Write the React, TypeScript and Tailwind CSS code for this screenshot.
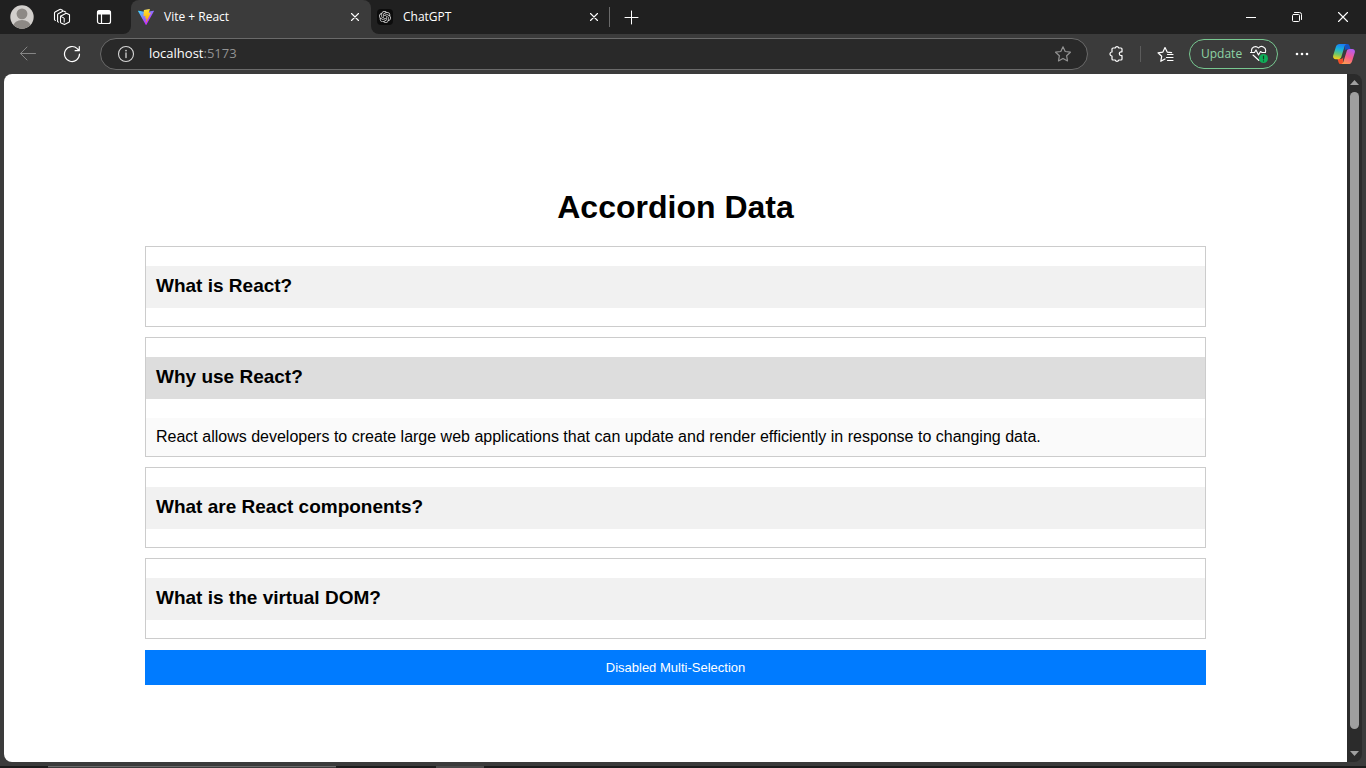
import { useState } from "react";
import type { ReactNode } from "react";
import { SiOpenai } from "react-icons/si";

const items = [
  {
    id: "1",
    question: "What is React?",
    answer: "React is a JavaScript library for building user interfaces.",
  },
  {
    id: "2",
    question: "Why use React?",
    answer:
      "React allows developers to create large web applications that can update and render efficiently in response to changing data.",
  },
  {
    id: "3",
    question: "What are React components?",
    answer: "Components are independent, reusable pieces of a user interface.",
  },
  {
    id: "4",
    question: "What is the virtual DOM?",
    answer: "The virtual DOM is a lightweight copy of the actual DOM.",
  },
];

function Icon({ size = 16, className = "", children }: { size?: number; className?: string; children: ReactNode }) {
  return (
    <svg
      width={size}
      height={size}
      viewBox={`0 0 ${size} ${size}`}
      fill="none"
      stroke="currentColor"
      strokeLinecap="round"
      strokeLinejoin="round"
      aria-hidden="true"
      className={`shrink-0 ${className}`}
    >
      {children}
    </svg>
  );
}

function Avatar() {
  return (
    <svg width="24" height="24" viewBox="0 0 23 23" aria-hidden="true">
      <defs>
        <clipPath id="avatar">
          <circle cx="11.5" cy="11.5" r="11.2" />
        </clipPath>
      </defs>
      <g clipPath="url(#avatar)">
        <rect width="23" height="23" fill="#d2cfcc" />
        <circle cx="11.5" cy="8.5" r="5.2" fill="#8d8985" />
        <ellipse cx="11.5" cy="20" rx="8.2" ry="5.6" fill="#8d8985" />
      </g>
    </svg>
  );
}

function ViteLogo() {
  return (
    <svg width="16" height="16" viewBox="0 0 256 257" aria-hidden="true" className="shrink-0">
      <defs>
        <linearGradient id="viteA" x1="-.828%" x2="57.636%" y1="7.652%" y2="78.411%">
          <stop offset="0%" stopColor="#41D1FF" />
          <stop offset="100%" stopColor="#BD34FE" />
        </linearGradient>
        <linearGradient id="viteB" x1="43.376%" x2="50.316%" y1="2.242%" y2="89.03%">
          <stop offset="0%" stopColor="#FFEA83" />
          <stop offset="8.333%" stopColor="#FFDD35" />
          <stop offset="100%" stopColor="#FFA800" />
        </linearGradient>
      </defs>
      <path
        fill="url(#viteA)"
        d="M255.153 37.938L134.897 252.976c-2.483 4.44-8.862 4.466-11.382.048L.875 37.958c-2.746-4.814 1.371-10.646 6.827-9.67l120.385 21.517a6.537 6.537 0 0 0 2.322-.004l117.867-21.483c5.438-.991 9.574 4.796 6.877 9.62Z"
      />
      <path
        fill="url(#viteB)"
        d="M185.432.063L96.44 17.501a3.268 3.268 0 0 0-2.634 3.014l-5.474 92.456a3.268 3.268 0 0 0 3.997 3.378l24.777-5.718c2.318-.535 4.413 1.507 3.936 3.838l-7.361 36.047c-.495 2.426 1.782 4.5 4.151 3.78l15.304-4.649c2.372-.72 4.652 1.36 4.15 3.788l-11.698 56.621c-.732 3.542 3.979 5.473 5.943 2.437l1.313-2.028l72.516-144.72c1.215-2.423-.88-5.186-3.54-4.672l-25.505 4.922c-2.396.462-4.435-1.77-3.759-4.114l16.646-57.705c.677-2.35-1.37-4.583-3.769-4.113Z"
      />
    </svg>
  );
}

function CopilotLogo() {
  return (
    <svg width="22" height="20" viewBox="0 0 22 20" aria-hidden="true">
      <defs>
        <linearGradient id="copilotBlue" x1="8" y1="0" x2="5" y2="15" gradientUnits="userSpaceOnUse">
          <stop offset="0" stopColor="#1a7df5" />
          <stop offset=".35" stopColor="#17b3dc" />
          <stop offset=".7" stopColor="#6fc66a" />
          <stop offset="1" stopColor="#f2ce1c" />
        </linearGradient>
        <linearGradient id="copilotPink" x1="18" y1="5" x2="11" y2="20" gradientUnits="userSpaceOnUse">
          <stop offset="0" stopColor="#b35cf0" />
          <stop offset=".5" stopColor="#f65a8d" />
          <stop offset="1" stopColor="#ffa04d" />
        </linearGradient>
      </defs>
      <path d="M12 0h2.4c1.3 0 1.8.9 2.2 2.1l1 3.2h-3.2c-1.600 0-2.300.800-2.700 2z" fill="#1552c4" />
      <path d="M10 20H7.600c-1.300 0-1.800-.900-2.200-2.100L4.500 15h3c1.600 0 2.300-.800 2.700-2z" fill="#f0502a" />
      <path d="M6.600 0h7.200c-1.300.200-1.900 1.100-2.300 2.400L8.400 12.800C7.900 14.400 7 15.200 5.400 15.200H2.700C.600 15.200-.300 13.500.200 11.600L3 2.600C3.500 1 4.800 0 6.600 0z" fill="url(#copilotBlue)" />
      <path d="M15.400 20H8.200c1.300-.200 1.900-1.100 2.300-2.400l3.100-10.200c.500-1.600 1.400-2.400 3-2.400h2.700c2.100 0 3 1.700 2.500 3.600L19 17.400c-.500 1.600-1.800 2.600-3.600 2.600z" fill="url(#copilotPink)" />
    </svg>
  );
}

function CloseIcon() {
  return (
    <Icon size={10}>
      <path d="M1.500 1.500l7 7M8.500 1.500l-7 7" strokeWidth="1.100" />
    </Icon>
  );
}

function TabStrip() {
  return (
    <header className="flex h-[34px] shrink-0 text-white">
      <div className="flex w-[131px] shrink-0 items-center rounded-br-lg bg-[#202020] pl-[10px]">
        <button aria-label="Profile" className="mr-[19px]">
          <Avatar />
        </button>
        <button aria-label="Workspaces" className="mr-[25px]">
          <Icon size={18}>
            <path d="M7.500 8.300l5.200-2.800c.4-.2.800-.2 1.200 0l2.600 1.300v6.400c0 .4-.2.800-.6 1L11.500 16.600 8.100 15c-.4-.2-.6-.5-.6-.9zM4.600 13.600V6.800c0-.5.200-.8.600-1l4.600-2.600c.4-.2.800-.2 1.200 0l1.600.8M1.500 11.800V5c0-.5.200-.8.600-1l4.600-2.600c.4-.2.800-.2 1.200 0l1.600.8" strokeWidth="1.100" />
            <path d="M7.500 8.300l3.700 1.800v4" strokeWidth="1" />
            <path d="M1.500 11.800l1 .6M4.600 13.600l1 .6" strokeWidth="1" />
          </Icon>
        </button>
        <button aria-label="Tab actions">
          <Icon size={16}>
            <rect x="1.500" y="1.500" width="13" height="13" rx="2" strokeWidth="1.200" />
            <path d="M2 2h12v3H2z" fill="currentColor" strokeWidth="1" />
            <path d="M5.500 5v9" strokeWidth="1.200" />
          </Icon>
        </button>
      </div>
      <div className="w-60 bg-[#202020]">
        <div className="flex h-full items-center rounded-t-lg bg-[#3b3b3b] pr-[11px] pl-[7px]">
          <ViteLogo />
          <span className="ml-[10px] flex-1 text-[12px]">Vite + React</span>
          <button aria-label="Close Vite + React">
            <CloseIcon />
          </button>
        </div>
      </div>
      <div className="flex flex-1 items-center rounded-bl-lg bg-[#202020]">
        <div className="flex h-5 w-[239px] items-center border-r border-[#6a6a6a] pr-[10px] pl-[6px]">
          <span className="grid size-4 shrink-0 place-items-center rounded bg-[#0c0c0c] text-[#d8d8d8]">
            <SiOpenai size={12} />
          </span>
          <span className="ml-[10px] flex-1 text-[12px]">ChatGPT</span>
          <button aria-label="Close ChatGPT">
            <CloseIcon />
          </button>
        </div>
        <button aria-label="New tab" className="ml-[14px]">
          <Icon size={15}>
            <path d="M7.500 1v13M1 7.500h13" strokeWidth="1" />
          </Icon>
        </button>
        <div className="ml-auto flex h-full">
          <button aria-label="Minimize" className="grid w-[46px] place-items-center">
            <Icon size={10}>
              <path d="M0 5.500h10" strokeLinecap="butt" />
            </Icon>
          </button>
          <button aria-label="Restore" className="grid w-[46px] place-items-center">
            <Icon size={10}>
              <rect x=".5" y="2.500" width="7" height="7" rx="1" />
              <path d="M2.500.5H7.500a2 2 0 0 1 2 2v5" />
            </Icon>
          </button>
          <button aria-label="Close window" className="grid w-[46px] place-items-center">
            <Icon size={12}>
              <path d="M1.500 1.500l9 9M10.500 1.500l-9 9" strokeWidth="1.100" />
            </Icon>
          </button>
        </div>
      </div>
    </header>
  );
}

function Toolbar() {
  return (
    <nav aria-label="Browser toolbar" className="flex h-10 shrink-0 items-center pr-[11px] pl-5 text-white">
      <button aria-label="Back" className="text-[#858585]">
        <Icon size={16}>
          <path d="M15.500 7.500H.5M7 1L.5 7.500l6.500 6.500" strokeWidth="1" />
        </Icon>
      </button>
      <button aria-label="Refresh" className="ml-[27px]">
        <Icon size={18}>
          <path d="M16.500 9A7.500 7.500 0 1 1 14.300 3.700L16.300 5.500M16.300 1.500v4.200h-4.200" strokeWidth="1.200" />
        </Icon>
      </button>
      <div className="ml-[19px] flex h-8 flex-1 items-center rounded-full border border-[#6a6a6a] bg-[#292929] pr-4 pl-4">
        <Icon size={18} className="text-[#d6d6d6]">
          <circle cx="9" cy="9" r="7.500" strokeWidth="1.100" />
          <path d="M9 8v4.500" strokeWidth="1.300" />
          <path d="M9 5.600v.1" strokeWidth="1.600" />
        </Icon>
        <a href="#address" className="ml-[14px] flex-1 text-[13px] text-[#929292]">
          <span className="text-white">localhost</span>:5173
        </a>
        <button aria-label="Add to favorites" className="text-[#929292]">
          <Icon size={16}>
            <path d="M8 .8l2.200 4.700 5.200.7-3.800 3.500.9 5.200L8 12.400l-4.500 2.500.9-5.200L.6 6.200l5.200-.7z" strokeWidth="1.200" />
          </Icon>
        </button>
      </div>
      <button aria-label="Extensions" className="ml-5">
        <Icon size={18}>
          <path d="M5 3h2.200a1.900 1.900 0 0 1 3.600 0H13a1 1 0 0 1 1 1v2.800h-.8a1.900 1.900 0 0 0 0 3.800h.8V14a1 1 0 0 1-1 1h-2.200a1.900 1.900 0 0 1-3.600 0H5a1 1 0 0 1-1-1v-3a2 2 0 0 1 0-4V4a1 1 0 0 1 1-1z" strokeWidth="1.200" />
        </Icon>
      </button>
      <span className="ml-[14px] h-4 w-px bg-[#5c5c5c]" />
      <button aria-label="Favorites" className="ml-4">
        <Icon size={17}>
          <path d="M8 13l-4.200 2.300.9-5L1 6.800l4.900-.7L8 1.500l2.200 4.600 4.400.6M10.500 8.500H16M9.500 11.500H16M10.500 14.500H16" strokeWidth="1.200" />
        </Icon>
      </button>
      <button className="ml-[15px] flex h-[30px] w-[89px] items-center justify-between rounded-full border border-[#78c891] pr-[9px] pl-[11px] text-[12px] text-[#8ed3a4]">
        Update
        <Icon size={18} className="text-white">
          <path d="M1.600 6.500A4 4 0 0 1 8.500 3a4 4 0 0 1 7 3.500M.5 7.500h4l1.500-2.600 2.500 5L10.500 6.500 12 7.500h3.500M3 10l6 5.500" strokeWidth="1.100" />
          <circle cx="13.500" cy="13.500" r="4.500" fill="#0fae58" stroke="none" />
          <path d="M13.500 11v2.800M13.500 15.800v.1" stroke="#163c25" strokeWidth="1.200" />
        </Icon>
      </button>
      <button aria-label="Settings and more" className="ml-4">
        <Icon size={16}>
          <g fill="currentColor" stroke="none">
            <circle cx="3" cy="8" r="1.300" />
            <circle cx="8" cy="8" r="1.300" />
            <circle cx="13" cy="8" r="1.300" />
          </g>
        </Icon>
      </button>
      <button aria-label="Copilot" className="ml-[23px]">
        <CopilotLogo />
      </button>
    </nav>
  );
}

function Scrollbar() {
  return (
    <div aria-hidden="true" className="flex w-[15px] shrink-0 flex-col items-center rounded-r-lg bg-[#2b2b2b] py-[6px] text-[#a0a0a0]">
      <svg width="9" height="5" viewBox="0 0 9 5" className="shrink-0">
        <path d="M4.500 0L9 5H0z" fill="currentColor" />
      </svg>
      <div className="mt-[7px] mb-[22px] w-[9px] flex-1 rounded-full bg-[#9f9f9f]" />
      <svg width="9" height="5" viewBox="0 0 9 5" className="shrink-0">
        <path d="M0 0h9L4.500 5z" fill="currentColor" />
      </svg>
    </div>
  );
}

function Accordion() {
  const [multi, setMulti] = useState(false);
  const [open, setOpen] = useState<string[]>(["2"]);

  const toggle = (id: string) => {
    if (open.includes(id)) setOpen(open.filter((other) => other !== id));
    else setOpen(multi ? [...open, id] : [id]);
  };

  return (
    <div className="mx-auto flex w-[79%] flex-col">
      <h1 className="mb-[19px] text-center text-[32px] leading-10 font-bold">Accordion Data</h1>
      <div className="flex flex-col gap-[10px]">
        {items.map(({ id, question, answer }) => {
          const isOpen = open.includes(id);
          return (
            <section key={id} className={`border border-[#cccccc] pt-[19px] ${isOpen ? "" : "pb-[18px]"}`}>
              <h3 className="text-[19px] leading-5 font-bold">
                <button
                  aria-expanded={isOpen}
                  aria-controls={`answer-${id}`}
                  onClick={() => toggle(id)}
                  className={`block w-full px-[10px] pt-[10px] pb-3 text-left ${isOpen ? "bg-[#dddddd]" : "bg-[#f1f1f1]"}`}
                >
                  {question}
                </button>
              </h3>
              {isOpen && (
                <div id={`answer-${id}`} className="mt-[19px] bg-[#fafafa] p-[10px] text-[16px] leading-[18px]">
                  {answer}
                </div>
              )}
            </section>
          );
        })}
      </div>
      <button onClick={() => setMulti(!multi)} className="mt-[11px] bg-[#007bff] p-[10px] text-[13px] leading-[15px] text-white">
        {multi ? "Enabled" : "Disabled"} Multi-Selection
      </button>
    </div>
  );
}

export default function App() {
  return (
    <div className="flex h-screen flex-col overflow-hidden bg-[#3b3b3b] font-['Open_Sans','Noto_Sans',sans-serif]">
      <TabStrip />
      <Toolbar />
      <div className="flex min-h-0 flex-1 px-1">
        <main className="flex-1 overflow-hidden rounded-l-lg bg-white pt-[113px] font-['Liberation_Sans',Arial,sans-serif] text-black">
          <Accordion />
        </main>
        <Scrollbar />
      </div>
      <div className="mt-1 flex h-[2px] shrink-0 bg-[#1c1c1c] pl-12">
        <div className="w-72 border-t border-[#6a6a6a] bg-[#3b3b3b]" />
        <div className="ml-[100px] w-12 bg-[#4a4a4a]" />
      </div>
    </div>
  );
}
